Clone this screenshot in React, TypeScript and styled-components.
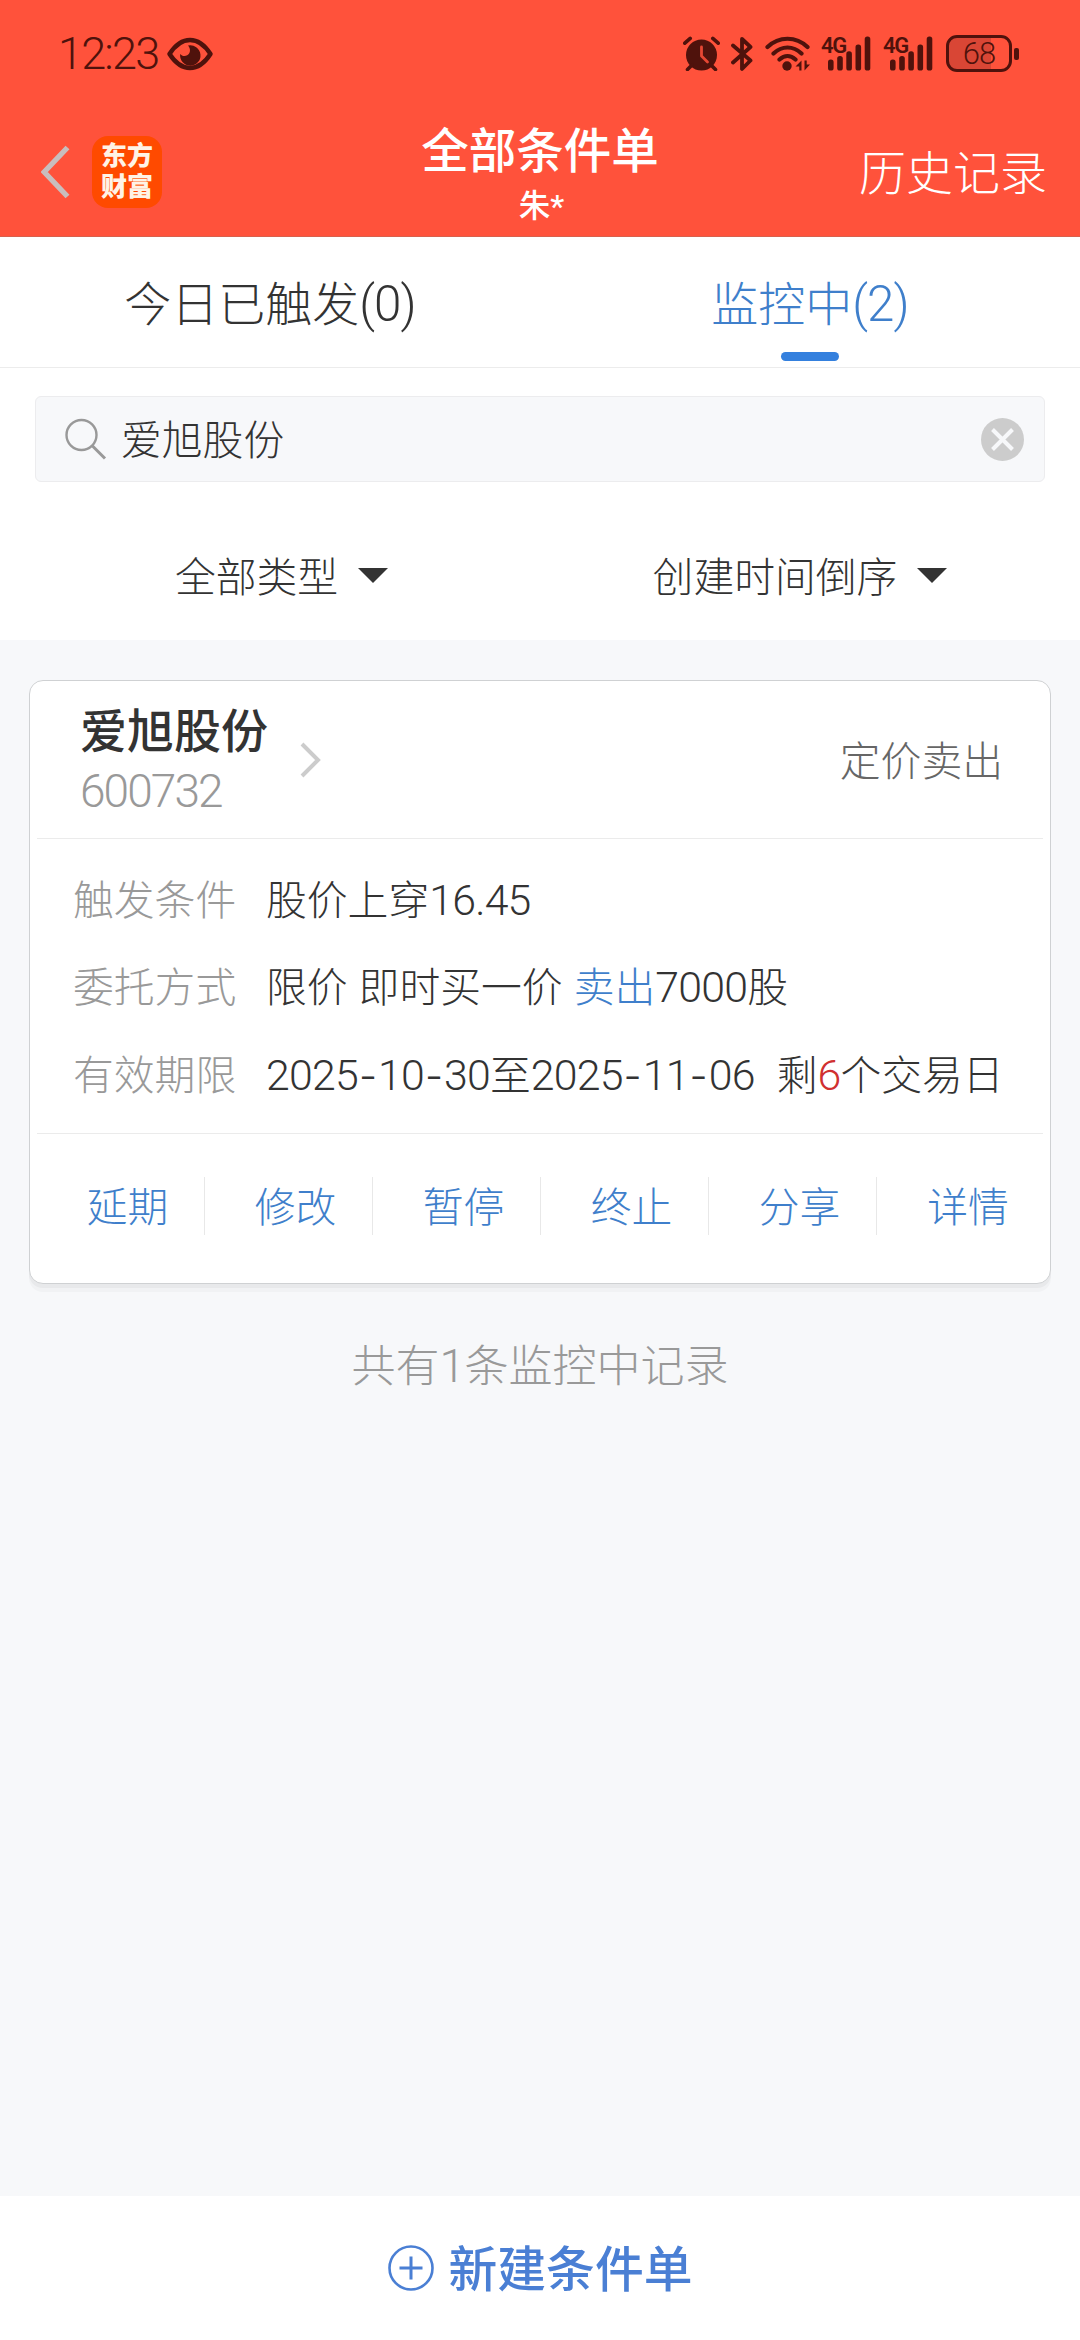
import React from "react";
import styled, { createGlobalStyle } from "styled-components";

const INK = "#4f120c";
const BLUE = "#3f7fcb";

const GlobalStyle = createGlobalStyle`
  * { box-sizing: border-box; }
  html, body { margin: 0; padding: 0; }
  body {
    background: #f7f8fa;
    color: #333;
    font-family: "Noto Sans CJK SC", "Noto Sans", sans-serif;
    font-weight: 300;
    -webkit-font-smoothing: antialiased;
  }
  svg { display: block; flex: none; }
`;

const Screen = styled.div`
  display: flex;
  flex-direction: column;
  width: 1080px;
  height: 2340px;
  overflow: hidden;
  background: #f7f8fa;
`;

const Header = styled.header`
  display: flex;
  flex-direction: column;
  height: 237px;
  background: #ff523b;
  border-bottom: 1px solid #d8604c;
`;

const StatusBar = styled.div`
  display: flex;
  align-items: center;
  height: 107px;
  padding: 0 61px 0 58px;
  color: ${INK};
`;

const Clock = styled.span`
  width: 109px;
  padding-top: 1px;
  font: 300 45px/60px Roboto, sans-serif;
  letter-spacing: -1.8px;
`;

const StatusIcons = styled.div`
  display: flex;
  align-items: center;
  margin-left: auto;
`;

const Gap = styled.i<{ $w: number }>`
  width: ${(p) => p.$w}px;
`;

const Signal = styled.div`
  position: relative;
  width: 51px;
  height: 35px;
`;

const SignalLabel = styled.span`
  position: absolute;
  left: 0;
  top: -2px;
  font: 600 22px/23px Roboto, sans-serif;
  letter-spacing: -1.4px;
`;

const Battery = styled.div`
  display: flex;
  align-items: center;
  justify-content: center;
  width: 66px;
  height: 37px;
  border: 3px solid ${INK};
  border-radius: 11px;
  background: linear-gradient(90deg, #d94635 0 42px, transparent 42px);
  font: 300 31px/31px Roboto, sans-serif;
  letter-spacing: -1px;
`;

const BatteryNub = styled.i`
  width: 5px;
  height: 12px;
  margin-left: 2px;
  border-radius: 2px;
  background: ${INK};
`;

const NavBar = styled.div`
  display: grid;
  grid-template-columns: 1fr auto 1fr;
  align-items: center;
  height: 129px;
  padding: 0 33px;
  color: #fff;
`;

const NavLeft = styled.div`
  display: flex;
  align-items: center;
  gap: 22px;
  padding-left: 8px;
`;

const Logo = styled.div`
  display: grid;
  place-content: center;
  width: 70px;
  height: 72px;
  padding-top: 1px;
  border-radius: 16px;
  background: #ff4a00;
  color: #fff3e6;
  font-family: Roboto, "Noto Sans CJK SC", sans-serif;
  font-size: 26px;
  font-weight: 900;
  line-height: 31px;
  text-align: center;
`;

const NavTitle = styled.div`
  display: flex;
  flex-direction: column;
  align-items: center;
  padding-top: 5px;
  font-family: Roboto, "Noto Sans CJK SC", sans-serif;
  font-weight: 500;
`;

const Title = styled.h1`
  margin: 0;
  font-size: 47.5px;
  font-weight: 500;
  line-height: 60px;
`;

const Account = styled.span`
  margin-top: 5px;
  padding-left: 3px;
  font-size: 31.5px;
  line-height: 40px;
`;

const History = styled.span`
  justify-self: end;
  padding-bottom: 4px;
  font-size: 47px;
  line-height: 60px;
`;

const Num = styled.span`
  font-family: Roboto, sans-serif;
  font-size: 1.05em;
  letter-spacing: -0.018em;
  line-height: 1;
`;

const Dash = styled.span`
  display: inline-block;
  width: 20px;
  font-family: Inter, sans-serif;
  font-size: 40px;
  line-height: 1;
  text-align: center;
`;

const Panel = styled.section`
  height: 403px;
  background: #fff;
`;

const Tabs = styled.nav`
  display: grid;
  grid-template-columns: 1fr 1fr;
  height: 131px;
  border-bottom: 1px solid #ececec;
`;

const Tab = styled.div<{ $active?: boolean }>`
  display: flex;
  flex-direction: column;
  align-items: center;
  padding-top: 34px;
  font-size: 47px;
  line-height: 60px;
  color: ${(p) => (p.$active ? BLUE : "#333")};
`;

const Indicator = styled.i`
  width: 58px;
  height: 9px;
  margin-top: 21px;
  border-radius: 5px;
  background: #3480de;
`;

const SearchBox = styled.div`
  display: flex;
  align-items: center;
  height: 86px;
  margin: 28px 35px 0;
  padding: 0 20px 0 29px;
  border: 1px solid #ececee;
  border-radius: 6px;
  background: #f7f8fa;
`;

const Query = styled.span`
  flex: 1;
  padding: 0 0 2px 14px;
  font-size: 40.8px;
  line-height: 56px;
`;

const Filters = styled.div`
  display: grid;
  grid-template-columns: 1fr 1fr;
  height: 158px;
  padding-top: 35px;
`;

const Filter = styled.div<{ $before?: number; $after?: number }>`
  display: flex;
  align-items: center;
  justify-content: center;
  gap: 20px;
  height: 116px;
  padding: 0 ${(p) => p.$after ?? 0}px 0 ${(p) => p.$before ?? 0}px;
  font-size: 40.8px;
  line-height: 56px;
`;

const Card = styled.article`
  width: 1022px;
  height: 604px;
  margin: 40px 29px 0;
  border: 1px solid #cfd1d3;
  border-radius: 14px;
  background: #fff;
  box-shadow: 0 4px 0 #e8e9eb, 0 8px 0 #f1f2f4;
  padding: 0 7px;
`;

const CardHead = styled.div`
  display: flex;
  align-items: center;
  height: 158px;
  padding: 0 40px 0 43px;
  border-bottom: 1px solid #ebebeb;
`;

const Stock = styled.div`
  display: flex;
  flex-direction: column;
  width: 220px;
`;

const StockName = styled.strong`
  margin-top: -2px;
  font-size: 47px;
  font-weight: 500;
  line-height: 62px;
`;

const StockCode = styled.span`
  padding-top: 2px;
  font: 300 46px/60px Roboto, sans-serif;
  letter-spacing: -1.9px;
  color: #999;
`;

const OrderType = styled.span`
  margin-left: auto;
  padding-bottom: 2px;
  font-size: 40.8px;
  line-height: 56px;
  color: #666;
`;

const Details = styled.dl`
  display: flex;
  flex-direction: column;
  height: 295px;
  margin: 0;
  padding: 15px 0 0 36px;
  border-bottom: 1px solid #ebebeb;
`;

const Detail = styled.div`
  display: flex;
  align-items: center;
  height: 87.5px;
  font-size: 40.8px;
  line-height: 56px;
  white-space: pre;
`;

const Label = styled.dt`
  width: 193px;
  color: #999;
`;

const Value = styled.dd`
  margin: 0;
  word-spacing: 2px;
`;

const Mark = styled.span<{ $color: string }>`
  color: ${(p) => p.$color};
`;

const Actions = styled.div`
  display: grid;
  grid-template-columns: repeat(6, 168px);
  padding-top: 43px;
`;

const Action = styled.div`
  display: flex;
  align-items: center;
  justify-content: center;
  height: 58px;
  padding: 0 0 3px 14px;
  font-size: 40.8px;
  line-height: 56px;
  color: ${BLUE};
  border-right: 1px solid #e8e8e8;
  &:last-child { border-right: 0; }
`;

const Summary = styled.p`
  margin: 49px 0 0;
  font-size: 44px;
  line-height: 60px;
  text-align: center;
  color: #999;
`;

const CreateBar = styled.footer`
  display: flex;
  align-items: center;
  justify-content: center;
  gap: 15px;
  height: 144px;
  margin-top: auto;
  background: #fff;
  color: #4a7fd4;
`;

const CreateLabel = styled.span`
  padding-bottom: 4px;
  font-size: 48.8px;
  font-weight: 500;
  line-height: 64px;
`;

const Eye = () => (
  <svg width="46" height="34" viewBox="0 0 46 34">
    <path d="M2.500 17C9 7 16 3 23 3s14 4 20.500 14C37 27 30 31 23 31S9 27 2.500 17z" fill="none" stroke={INK} strokeWidth="4.400" strokeLinejoin="round" />
    <path d="M21 8.500a10.200 10.200 0 1 1-7.800 8.500c1.500 2 4.500 2.800 7 1.300 3.300-2 3.800-6.500.8-9.800z" fill={INK} />
  </svg>
);

const Alarm = () => (
  <svg width="37" height="35" viewBox="0 0 37 35">
    <circle cx="18.500" cy="19" r="15.500" fill={INK} />
    <path d="M9 29l-4.500 4.500M28 29l4.500 4.500M1.800 7.200l5.400-4.800M35.200 7.200l-5.400-4.800" stroke={INK} strokeWidth="3.600" strokeLinecap="round" />
    <path d="M18.500 11v9l6 6" fill="none" stroke="#e64733" strokeWidth="2.800" strokeLinecap="round" strokeLinejoin="round" />
  </svg>
);

const Bluetooth = () => (
  <svg width="22" height="36" viewBox="0 0 22 36">
    <path d="M2 9.500l17.500 15L11 33V3l8.500 8L2 26.500" fill="none" stroke={INK} strokeWidth="3.800" strokeLinecap="round" strokeLinejoin="round" />
  </svg>
);

const Wifi = () => (
  <svg width="45" height="35" viewBox="0 0 45 35">
    <g fill="none" stroke={INK} strokeWidth="4.200" strokeLinecap="round">
      <path d="M2.500 11c11.500-11 28.500-11 40 0M8.500 17.500c8.500-8 19.500-8 28 0M14.500 23.500c5-4.500 11-4.500 16 0" />
    </g>
    <circle cx="22" cy="30" r="4.700" fill={INK} />
    <path d="M30.500 30.500l6-6v10h-2.200v-4zM45 28.500l-5.500 6V24.500h2.200v4z" fill={INK} />
  </svg>
);

const bars = [
  [7, 23.5],
  [16.2, 20],
  [25.3, 15.3],
  [34.5, 8.5],
  [43.7, 0.5],
];

const CellSignal = () => (
  <Signal>
    <SignalLabel>4G</SignalLabel>
    <svg width="51" height="35" viewBox="0 0 51 35">
      {bars.map(([x, y]) => (
        <rect key={x} x={x} y={y} width="5.600" height={34.5 - y} rx="2.600" fill={INK} />
      ))}
    </svg>
  </Signal>
);

const Back = () => (
  <svg width="29" height="54" viewBox="0 0 29 54">
    <path d="M26.500 2.500L3.200 27l23.300 24.500" fill="none" stroke="#c9bdbd" strokeWidth="5.400" />
  </svg>
);

const SearchIcon = () => (
  <svg width="42" height="42" viewBox="0 0 42 42">
    <circle cx="16.500" cy="17" r="15" fill="none" stroke="#999" strokeWidth="2.400" />
    <path d="M27 27.500l13 13" stroke="#999" strokeWidth="3" />
  </svg>
);

const Clear = () => (
  <svg width="43" height="43" viewBox="0 0 43 43">
    <circle cx="21.500" cy="21.500" r="21.500" fill="#ccc" />
    <path d="M11.500 11.500l20 20M31.500 11.500l-20 20" stroke="#f7f8fa" strokeWidth="4" />
  </svg>
);

const Caret = () => (
  <svg width="30" height="15" viewBox="0 0 30 15">
    <path d="M0 0h30L15 15z" fill="#333" />
  </svg>
);

const Chevron = () => (
  <svg width="21" height="36" viewBox="0 0 21 36">
    <path d="M2 2l16 16L2 34" fill="none" stroke="#ccc" strokeWidth="4" />
  </svg>
);

const PlusCircle = () => (
  <svg width="46" height="46" viewBox="0 0 46 46">
    <circle cx="23" cy="23" r="21.500" fill="none" stroke="#4a7fd4" strokeWidth="2.600" />
    <path d="M23 11.500v23M11.500 23h23" stroke="#4a7fd4" strokeWidth="3" />
  </svg>
);

const DateText = ({ value }: { value: string }) => (
  <>
    {value.split("-").map((part, i) => (
      <React.Fragment key={i}>
        {i > 0 && <Dash>-</Dash>}
        <Num>{part}</Num>
      </React.Fragment>
    ))}
  </>
);

const actions = ["延期", "修改", "暂停", "终止", "分享", "详情"];

export default function App() {
  return (
    <Screen>
      <GlobalStyle />
      <Header>
        <StatusBar>
          <Clock>12:23</Clock>
          <Eye />
          <StatusIcons>
            <Alarm />
            <Gap $w={11} />
            <Bluetooth />
            <Gap $w={12} />
            <Wifi />
            <Gap $w={11} />
            <CellSignal />
            <Gap $w={11} />
            <CellSignal />
            <Gap $w={12} />
            <Battery>68</Battery>
            <BatteryNub />
          </StatusIcons>
        </StatusBar>
        <NavBar>
          <NavLeft>
            <Back />
            <Logo>
              <span>东方</span>
              <span>财富</span>
            </Logo>
          </NavLeft>
          <NavTitle>
            <Title>全部条件单</Title>
            <Account>朱*</Account>
          </NavTitle>
          <History>历史记录</History>
        </NavBar>
      </Header>
      <Panel>
        <Tabs>
          <Tab>
            <span>
              今日已触发<Num>(0)</Num>
            </span>
          </Tab>
          <Tab $active>
            <span>
              监控中<Num>(2)</Num>
            </span>
            <Indicator />
          </Tab>
        </Tabs>
        <SearchBox>
          <SearchIcon />
          <Query>爱旭股份</Query>
          <Clear />
        </SearchBox>
        <Filters>
          <Filter $before={23}>
            全部类型
            <Caret />
          </Filter>
          <Filter $after={20}>
            创建时间倒序
            <Caret />
          </Filter>
        </Filters>
      </Panel>
      <Card>
        <CardHead>
          <Stock>
            <StockName>爱旭股份</StockName>
            <StockCode>600732</StockCode>
          </Stock>
          <Chevron />
          <OrderType>定价卖出</OrderType>
        </CardHead>
        <Details>
          <Detail>
            <Label>触发条件</Label>
            <Value>
              股价上穿<Num>16.45</Num>
            </Value>
          </Detail>
          <Detail>
            <Label>委托方式</Label>
            <Value>
              限价 即时买一价 <Mark $color={BLUE}>卖出</Mark>
              <Num>7000</Num>股
            </Value>
          </Detail>
          <Detail>
            <Label>有效期限</Label>
            <Value>
              <DateText value="2025-10-30" />至<DateText value="2025-11-06" />
              {"  "}剩
              <Mark $color="#d03030">
                <Num>6</Num>
              </Mark>
              个交易日
            </Value>
          </Detail>
        </Details>
        <Actions>
          {actions.map((name) => (
            <Action key={name}>{name}</Action>
          ))}
        </Actions>
      </Card>
      <Summary>
        共有<Num>1</Num>条监控中记录
      </Summary>
      <CreateBar>
        <PlusCircle />
        <CreateLabel>新建条件单</CreateLabel>
      </CreateBar>
    </Screen>
  );
}
